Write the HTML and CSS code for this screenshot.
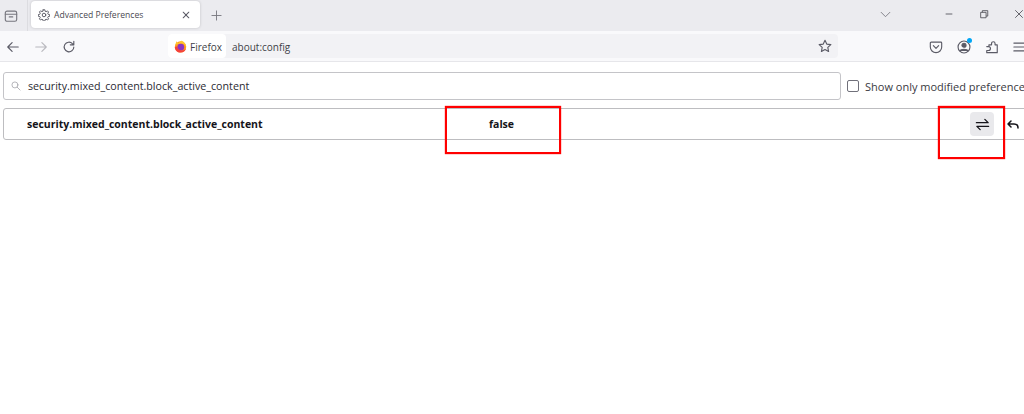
FILE: index.html
```html
<!DOCTYPE html>
<html lang="en">
<head>
<meta charset="utf-8">
<title>Advanced Preferences</title>
<link rel="stylesheet" href="styles.css">
</head>
<body>
<header class="tabbar">
  <div class="tabs-left">
    <svg class="ico grey" viewBox="0 0 16 16"><rect x="1.500" y="2.500" width="13" height="11.500" rx="2"/><path d="M1.500 6h13M6 9h4"/></svg>
  </div>
  <div class="tab">
    <svg class="gear" viewBox="0 0 16 16"><circle cx="8" cy="8" r="2.400"/><path d="M6.900 1h2.200l.4 2 1.300.6 1.800-1.100 1.500 1.500-1.100 1.800.6 1.300 2 .4v2.200l-2 .4-.6 1.300 1.100 1.800-1.500 1.500-1.800-1.100-1.300.6-.4 2H6.900l-.4-2-1.300-.6-1.800 1.100-1.500-1.500 1.100-1.800-.6-1.300-2-.4V7.400l2-.4.6-1.300-1.100-1.800 1.500-1.500 1.800 1.100 1.300-.6z"/></svg>
    <span class="tab-title">Advanced Preferences</span>
    <svg class="tab-close" viewBox="0 0 10 10"><path d="M1.500 1.500l7 7M8.500 1.500l-7 7"/></svg>
  </div>
  <svg class="newtab" viewBox="0 0 12 12"><path d="M6 1v10M1 6h10"/></svg>
  <div class="tabbar-right">
    <svg class="chev" viewBox="0 0 12 8"><path d="M1 1.500l5 5 5-5"/></svg>
    <div class="winctl">
      <svg class="win" viewBox="0 0 12 12"><path d="M2 6h8"/></svg>
      <svg class="win" viewBox="0 0 12 12"><path d="M2 4h6.500v6.500H2zM4 4V2h6.500v6.500H8.500"/></svg>
      <svg class="win" viewBox="0 0 12 12"><path d="M1.500 1.500l9 9M10.500 1.500l-9 9"/></svg>
    </div>
  </div>
</header>
<nav class="navbar">
  <div class="nav-btns">
    <svg class="ico" viewBox="0 0 16 16"><path d="M14 8H2.500M7 3 2 8l5 5"/></svg>
    <svg class="ico dim" viewBox="0 0 16 16"><path d="M2 8h11.500M9 3l5 5-5 5"/></svg>
    <svg class="ico" viewBox="0 0 16 16"><path d="M13.500 8a5.500 5.500 0 1 1-1.600-3.900L13.500 5.500M13.500 1.500v4h-4"/></svg>
  </div>
  <div class="urlbar">
    <div class="chip">
      <svg class="fx" viewBox="0 0 16 16"><circle cx="8" cy="8.500" r="7" fill="#ff9a1f"/><path d="M1.500 6 3 1.500 5 4l4-3c3 .5 6 4 6 7.500-1.200-3-3.500-4.500-6-4.300C6 4.400 3.500 5 1.500 6z" fill="#ffc52e"/><circle cx="8.300" cy="8.800" r="4.200" fill="#8a33c4"/><path d="M1 8.500c0 4 3.200 7 7 7 3.500 0 6-2 6.800-5-2 2.300-5 2.800-7.500 1.800C5.200 11.500 4 10 4.200 7.800z" fill="#f4403c"/></svg>
      <span>Firefox</span>
    </div>
    <span class="url">about:config</span>
    <svg class="ico star" viewBox="0 0 16 16"><path d="M8 1.500l2 4.300 4.700.6-3.500 3.200.9 4.700L8 12l-4.100 2.300.9-4.700L1.300 6.400 6 5.800z"/></svg>
  </div>
  <div class="nav-right">
    <svg class="ico" viewBox="0 0 16 16"><path d="M2.500 2.500h11a1 1 0 0 1 1 1V8a6.500 6.500 0 0 1-13 0V3.500a1 1 0 0 1 1-1zM5 6.500l3 3 3-3"/></svg>
    <span class="acct">
      <svg class="ico" viewBox="0 0 16 16"><circle cx="8" cy="8" r="6.800"/><circle cx="8" cy="6" r="2.300" fill="#5b5b66"/><path d="M3.500 12.500c1-2.500 8-2.500 9 0" fill="#5b5b66"/></svg>
      <i class="dot"></i>
    </span>
    <svg class="ico" viewBox="0 0 16 16"><path d="M2 7.500h2.500V5.500h3V4a2 2 0 0 1 4 0v1.500h2.500v9H2v-2.500h2a2.200 2.200 0 0 0 0-4.500z"/></svg>
    <svg class="ico" viewBox="0 0 16 16"><path d="M1 3.500h11.500M1 8h11.500M1 12.500h11.500"/></svg>
  </div>
</nav>
<main class="content">
  <div class="searchrow">
    <label class="search">
      <svg class="search-ico" viewBox="0 0 14 14"><circle cx="5.500" cy="5.500" r="4.200"/><path d="M8.700 8.700l4 4"/></svg>
      <span>security.mixed_content.block_active_content</span>
    </label>
    <span class="check"></span>
    <span class="check-label">Show only modified preferences</span>
  </div>
  <div class="prefrow">
    <span class="pref-name">security.mixed_content.block_active_content</span>
    <span class="pref-val">false</span>
    <span class="toggle">
      <svg viewBox="0 0 16 16"><path d="M1.500 6h12.500L10.500 2.500M14.500 10H2l3.500 3.500"/></svg>
    </span>
    <svg class="reset" viewBox="0 0 12 9"><path d="M4 1 1 4l3 3M1 4h6c2.500 0 4 1.500 4 4"/></svg>
  </div>
  <div class="mark mark-val"></div>
  <div class="mark mark-toggle"></div>
</main>
</body>
</html>
```

FILE: styles.css
```css
* { box-sizing: border-box; }
html, body { margin: 0; height: 100%; overflow: hidden; background: #fff; }
body { width: 1024px; font-family: "Open Sans", "Noto Sans", sans-serif; color: #15141a; position: relative; }
svg { display: block; flex: none; fill: none; stroke: #5b5b66; stroke-width: 1.300; stroke-linecap: round; stroke-linejoin: round; }
.ico { width: 14px; height: 14px; }
.dim { opacity: .4; }
.grey { stroke: #77777f; }

.tabbar { height: 31px; background: #ebebef; display: flex; align-items: flex-start; }
.tabs-left { width: 28px; height: 31px; display: flex; align-items: center; padding-left: 4px; border-right: 1px solid #dcdce0; }
.tab { width: 169px; height: 27px; margin: 1px 0 0 3px; background: #fff; border-radius: 4px; box-shadow: 0 0 3px rgba(0,0,0,.18); display: flex; align-items: center; padding: 0 10px 0 7px; gap: 4px; }
.gear { width: 12px; height: 12px; }
.tab-title { font-size: 8.600px; color: #4a4a52; flex: 1; white-space: nowrap; }
.tab-close { width: 8px; height: 8px; }
.newtab { width: 11px; height: 11px; margin: 9.500px 0 0 11px; stroke-width: 1; stroke: #77777f; }
.tabbar-right { margin-left: auto; display: flex; align-items: center; height: 28px; }
.chev { width: 11px; height: 7px; margin-right: 53px; stroke-width: 1; stroke: #77777f; }
.winctl { display: flex; gap: 25px; }
.win { width: 10px; height: 10px; stroke-width: 1; stroke: #4a4a52; stroke-linecap: butt; stroke-linejoin: miter; }

.navbar { height: 31px; background: #f9f9fb; border-bottom: 1px solid #e6e6ea; display: flex; align-items: center; padding-top: 2px; }
.nav-btns { flex: none; width: 168px; display: flex; gap: 14px; padding-left: 6px; }
.urlbar { flex: none; width: 670px; height: 24px; margin-bottom: 2px; background: #f2f2f5; border-radius: 4px; display: flex; align-items: center; font-size: 10px; }
.chip { width: 58px; height: 24px; background: #fff; border-radius: 4px; display: flex; align-items: center; gap: 3px; padding: 1px 0 0 6px; color: #3f3f48; }
.fx { width: 13px; height: 13px; stroke: none; }
.url { margin: 1px 0 0 6px; flex: 1; color: #3f3f48; }
.star { margin-right: 6px; }
.nav-right { flex: none; display: flex; align-items: center; gap: 14px; margin-left: 91px; }
.acct { position: relative; display: block; }
.dot { position: absolute; top: -2px; right: -1px; width: 5px; height: 5px; border-radius: 50%; background: #00a6f5; }

.content { padding: 10px 0 0 3px; }
.searchrow { display: flex; align-items: center; height: 28px; white-space: nowrap; }
.search { width: 838px; height: 28px; flex: none; border: 1px solid #c4c4c8; border-radius: 3px; display: flex; align-items: center; padding-left: 7px; gap: 7px; font-size: 10.700px; color: #2b2a33; }
.search-ico { width: 10px; height: 10px; stroke: #9a9aa0; stroke-width: 1; }
.check { width: 12px; height: 12px; margin-left: 6px; border: 1px solid #70707a; border-radius: 2px; flex: none; }
.check-label { margin-left: 6px; font-size: 11px; color: #3a3a42; }
.prefrow { width: 1040px; height: 32px; margin-top: 8px; border: 1px solid #bdbdc0; border-radius: 3px; display: flex; align-items: center; position: relative; font-size: 10.500px; font-weight: 700; }
.pref-name { margin-left: 23px; width: 462px; white-space: nowrap; }
.pref-val { width: 481px; }
.toggle { width: 24px; height: 24px; background: #e9e9ec; border-radius: 4px; display: flex; align-items: center; justify-content: center; }
.toggle svg { width: 15px; height: 15px; stroke: #15141a; stroke-width: 1.400; }
.reset { width: 12px; height: 9px; margin-left: 13px; stroke: #15141a; stroke-width: 1.500; }

.mark { position: absolute; border: 2px solid #ff0000; box-shadow: 0 0 1px #ff0000; }
.mark-val { left: 445px; top: 106px; width: 116px; height: 48px; }
.mark-toggle { left: 938px; top: 106px; width: 67px; height: 53px; }
```
